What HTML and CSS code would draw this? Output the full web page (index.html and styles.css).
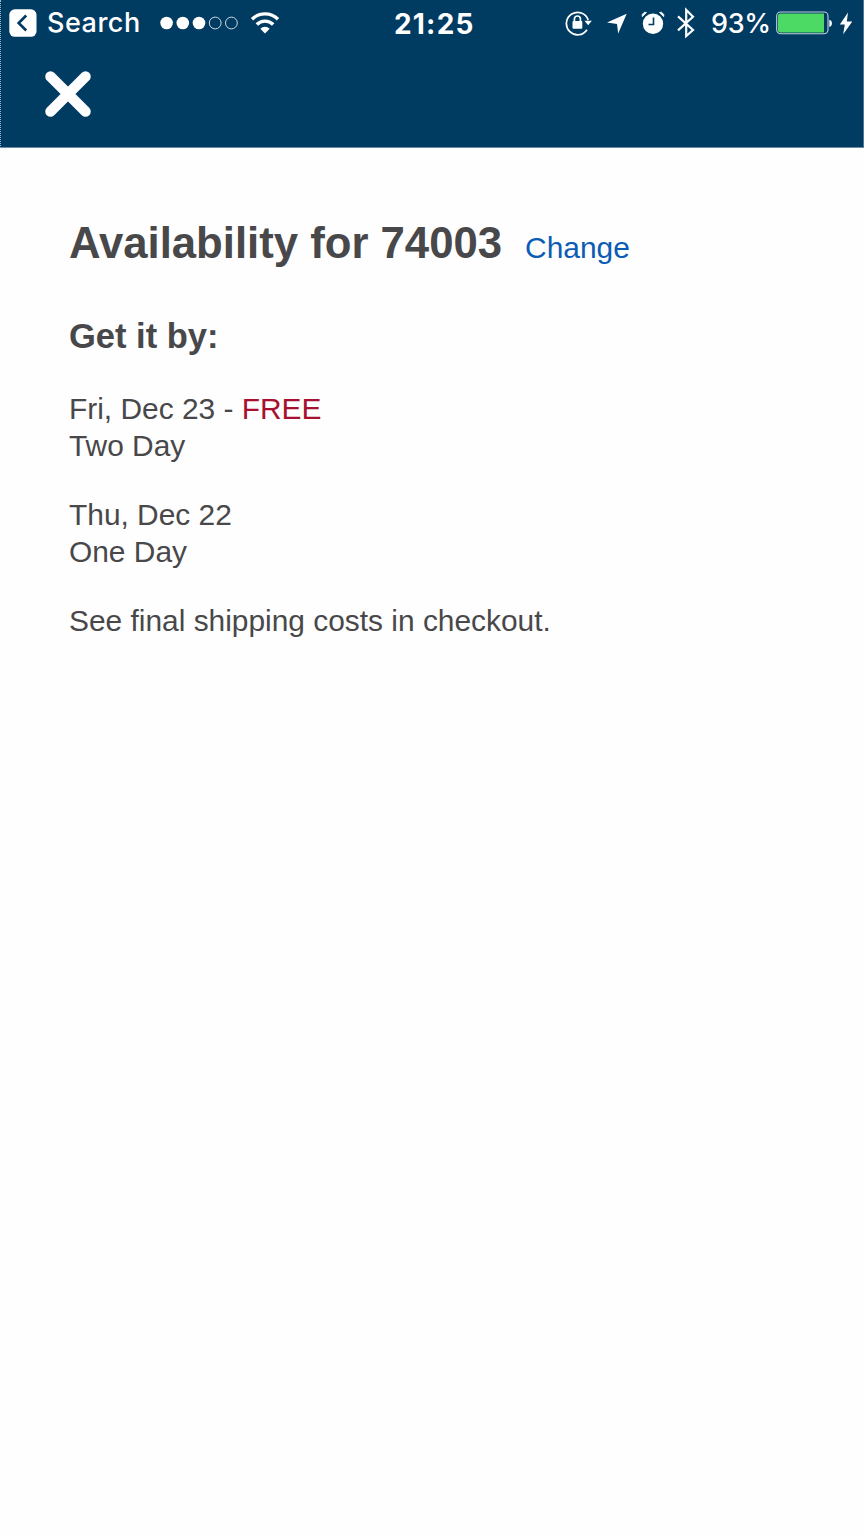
FILE: index.html
```html
<!DOCTYPE html>
<html lang="en">
<head>
  <meta charset="UTF-8" />
  <meta name="viewport" content="width=device-width, initial-scale=1.0" />
  <title>Availability</title>
  <link rel="stylesheet" href="styles.css">
</head>
<body>
  <header class="header">
    <div class="status-bar">
      <div class="status-left">
        <svg class="back-icon" width="28" height="28" viewBox="0 0 28 28">
          <rect x=".3" y=".3" width="27.2" height="27.5" rx="5.5" fill="#fff"/>
          <path d="M17.200 6.500 9.700 14l7.500 7.500" fill="none" stroke="#003b62" stroke-width="2.700"/>
        </svg>
        <span class="back-label">Search</span>
        <svg class="signal" width="80" height="14" viewBox="0 0 80 14">
          <g fill="#fff">
            <circle cx="6.600" cy="7" r="6.300"/>
            <circle cx="22.800" cy="7" r="6.300"/>
            <circle cx="39" cy="7" r="6.300"/>
          </g>
          <g fill="none" stroke="#cfdbe4" stroke-width="1">
            <circle cx="55.200" cy="7" r="5.900"/>
            <circle cx="71.400" cy="7" r="5.900"/>
          </g>
        </svg>
        <svg class="wifi" width="30" height="22" viewBox="0 0 30 22">
          <g fill="none" stroke="#fff" stroke-width="3.400">
            <path d="M2 7.300a18.400 18.400 0 0 1 26 0"/>
            <path d="M6.800 12.500a11.600 11.600 0 0 1 16.400 0"/>
          </g>
          <path d="M10.300 16.700a6.800 6.800 0 0 1 9.400 0L15 21.500z" fill="#fff"/>
        </svg>
      </div>
      <span class="time">21:25</span>
      <div class="status-right">
        <svg class="lock" width="28" height="26" viewBox="0 0 28 26">
          <path d="M22 19.700A11.200 11.200 0 1 1 23.200 10" fill="none" stroke="#fff" stroke-width="1.700"/>
          <path d="M19.500 10.800h7.300L23.200 15.300z" fill="#fff"/>
          <rect x="7.500" y="11" width="9.800" height="7.800" rx="1" fill="#fff"/>
          <path d="M9.400 11.500V9a3 3 0 0 1 6 0v2.500" fill="none" stroke="#fff" stroke-width="1.700"/>
        </svg>
        <svg class="location" width="22" height="22" viewBox="0 0 22 22">
          <path d="M20.700 1.700 12.200 21.500 11 12 1 10.600z" fill="#fff"/>
        </svg>
        <svg class="alarm" width="24" height="24" viewBox="0 0 24 24">
          <circle cx="12" cy="12.800" r="10.200" fill="#fff"/>
          <path d="M1.300 5.700 5.500 1.500 3.500 1.200 1.200 3.500zM22.700 5.700 18.500 1.500l2-.3 2.300 2.300z" fill="#fff" stroke="#fff" stroke-width=".8"/>
          <path d="M12.500 6.500v7H7.500" fill="none" stroke="#003b62" stroke-width="1.600"/>
        </svg>
        <svg class="bluetooth" width="18" height="32" viewBox="0 0 18 32">
          <path d="M1 9.400 16 23 9.200 29V3L16 9.800 1 23.400" fill="none" stroke="#fff" stroke-width="2.200"/>
        </svg>
        <span class="percent">93%</span>
        <svg class="battery" width="57" height="24" viewBox="0 0 57 24">
          <rect x=".7" y="1" width="51.300" height="21.800" rx="4" fill="none" stroke="#c5d4dd" stroke-width="1.100"/>
          <path d="M4.500 2.500H48v18.900H4.500a2.500 2.500 0 0 1-2.500-2.500V5a2.500 2.500 0 0 1 2.500-2.500z" fill="#4cd964"/>
          <path d="M53.300 8.800c3.500.5 3.500 6.700 0 7.200z" fill="#fff"/>
        </svg>
        <svg class="bolt" width="14" height="24" viewBox="0 0 14 24">
          <path d="M9 1.500.8 13.500h5L4.200 23.300 13.300 10.500H7.800z" fill="#fff"/>
        </svg>
      </div>
    </div>
    <button class="close" aria-label="Close">
      <svg width="48" height="48" viewBox="0 0 48 48">
        <path d="M6.500 6.500l35 35M41.500 6.500l-35 35" stroke="#fff" stroke-width="10.500" stroke-linecap="round"/>
      </svg>
    </button>
  </header>

  <main class="content">
    <div class="title-row">
      <h1>Availability for 74003</h1>
      <a class="change" href="#">Change</a>
    </div>
    <h2>Get it by:</h2>
    <p>Fri, Dec 23 - <span class="free">FREE</span><br>Two Day</p>
    <p>Thu, Dec 22<br>One Day</p>
    <p>See final shipping costs in checkout.</p>
  </main>
</body>
</html>
```
FILE: styles.css
```css
* {
  box-sizing: border-box;
}
body {
  margin: 0;
  background: #fefefe;
  color: #48484a;
  font-family: "Liberation Sans", Arial, sans-serif;
}
svg {
  display: block;
  flex: none;
}
.header {
  height: 148px;
  background: #003b62;
  border-left: 1px dotted #9fb9cb;
  border-right: 1px solid #4d7896;
  border-bottom: 1px solid #6b8da5;
}
.status-bar {
  display: flex;
  height: 46px;
  color: #fff;
  font-family: Inter, sans-serif;
  font-size: 27px;
  font-weight: 500;
  line-height: 46px;
  white-space: nowrap;
}
.status-left {
  display: flex;
  align-items: center;
  width: 393px;
  padding-left: 8px;
}
.back-label {
  width: 123px;
  padding-left: 10px;
  letter-spacing: 0.5px;
}
.wifi {
  margin-left: 10px;
}
.time {
  width: 171px;
  font-size: 28px;
  font-weight: 700;
  letter-spacing: 1.2px;
  padding-top: 1px;
}
.status-right {
  display: flex;
  align-items: center;
}
.location {
  margin-left: 13px;
}
.alarm {
  margin-left: 13px;
}
.bluetooth {
  margin-left: 12px;
}
.percent {
  width: 81px;
  padding: 2px 0 0 16px;
  letter-spacing: -0.3px;
}
.bolt {
  margin-left: 6px;
}
.close {
  display: block;
  margin: 24px 0 0 43px;
  padding: 0;
  border: none;
  background: none;
}
.content {
  padding: 69px 69px 0;
}
.title-row {
  display: flex;
  align-items: baseline;
}
h1 {
  margin: 0;
  font-size: 43.7px;
  line-height: 52px;
}
.change {
  margin-left: 23px;
  color: #0b5cb5;
  font-size: 29.9px;
  text-decoration: none;
}
h2 {
  margin: 47px 0 34px;
  font-size: 34.5px;
  line-height: 40px;
}
p {
  margin: 0 0 32px;
  font-size: 29.9px;
  line-height: 37px;
}
.free {
  color: #a8102f;
}
```
